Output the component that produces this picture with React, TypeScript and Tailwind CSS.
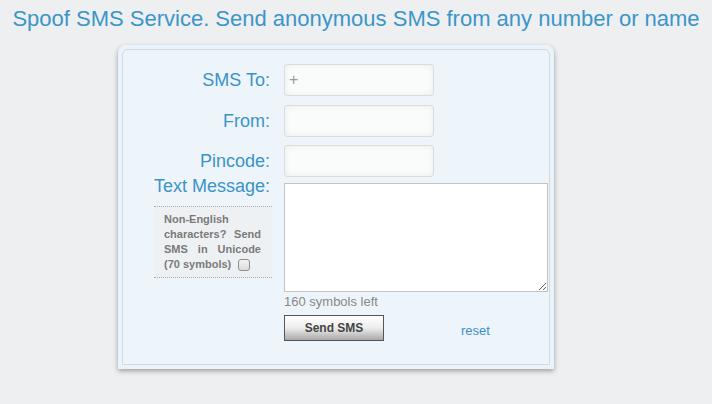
export default function App() {
  return (
    <div className="min-h-screen bg-[#eeeff1] font-['Liberation_Sans',Arial,sans-serif] pt-[6px]">
      <h1 className="text-center text-[22px] leading-[25px] text-[#3a96c8] font-normal">
        Spoof SMS Service. Send anonymous SMS from any number or name
      </h1>
      <div className="ml-[118px] mt-[14px] w-[436px] p-[4px] bg-[#eaf3f9] rounded-t-[8px] shadow-[0_2px_5px_rgba(0,0,0,0.35)]">
        <div className="border border-[#d3d9dc] rounded-t-[6px] bg-[#edf5fb] pt-[14px] pb-[23px] pr-[1px]">
          <div className="flex items-center h-[32px] mb-[9px]">
            <label className="w-[149px] pr-[2px] text-right text-[18px] text-[#3b93c6]">SMS To:</label>
            <input
              defaultValue="+"
              className="ml-[12px] w-[150px] h-[32px] border border-[#d9dddf] rounded-[3px] bg-[#fafbfb] shadow-[inset_0_0_6px_rgba(0,0,0,0.07)] pl-[4px] text-[16px] text-[#9a9a9a] outline-none"
            />
          </div>
          <div className="flex items-center h-[32px] mb-[8px]">
            <label className="w-[149px] pr-[2px] text-right text-[18px] text-[#3b93c6]">From:</label>
            <input className="ml-[12px] w-[150px] h-[32px] border border-[#d9dddf] rounded-[3px] bg-[#fafbfb] shadow-[inset_0_0_6px_rgba(0,0,0,0.07)] pl-[4px] text-[16px] outline-none" />
          </div>
          <div className="flex items-center h-[32px]">
            <label className="w-[149px] pr-[2px] text-right text-[18px] text-[#3b93c6]">Pincode:</label>
            <input className="ml-[12px] w-[150px] h-[32px] border border-[#d9dddf] rounded-[3px] bg-[#fafbfb] shadow-[inset_0_0_6px_rgba(0,0,0,0.07)] pl-[4px] text-[16px] outline-none" />
          </div>
          <div className="flex items-start">
            <div className="w-[149px] -mt-[1px]">
              <div className="pr-[2px] text-right text-[18px] leading-[21px] text-[#3b93c6]">Text Message:</div>
              <div className="ml-[31px] mt-[9px] w-[118px] border-y border-dotted border-[#a9abad] bg-[#eef1f3] pt-[5px] pb-[5px] pl-[10px] pr-[11px] text-[11px] leading-[15px] font-bold text-[#7a7a7a]">
                <div>Non-English</div>
                <div className="flex justify-between">
                  <span>characters?</span>
                  <span>Send</span>
                </div>
                <div className="flex justify-between">
                  <span>SMS</span>
                  <span>in</span>
                  <span>Unicode</span>
                </div>
                <div className="flex items-center">
                  <span>(70 symbols)</span>
                  <span className="ml-[7px] inline-block w-[12px] h-[12px] rounded-[3px] border border-[#8f8f8f] bg-linear-to-b from-[#f4f4f4] to-[#dcdcdc]" />
                </div>
              </div>
            </div>
            <div className="ml-[12px] mt-[6px]">
              <textarea className="block w-[264px] h-[109px] border border-[#c3c3c3] bg-white resize outline-none" />
              <div className="mt-[2px] text-[13px] leading-[16px] text-[#888]">160 symbols left</div>
              <div className="flex items-center mt-[5px]">
                <button className="w-[100px] h-[26px] border border-[#555] bg-linear-to-b from-[#ffffff] via-[#ededed] to-[#a9a9a9] text-[12px] font-bold text-[#444]">
                  Send SMS
                </button>
                <a href="#" className="ml-[77px] mt-[6px] text-[13px] text-[#3a8fc4]">
                  reset
                </a>
              </div>
            </div>
          </div>
        </div>
      </div>
    </div>
  );
}
